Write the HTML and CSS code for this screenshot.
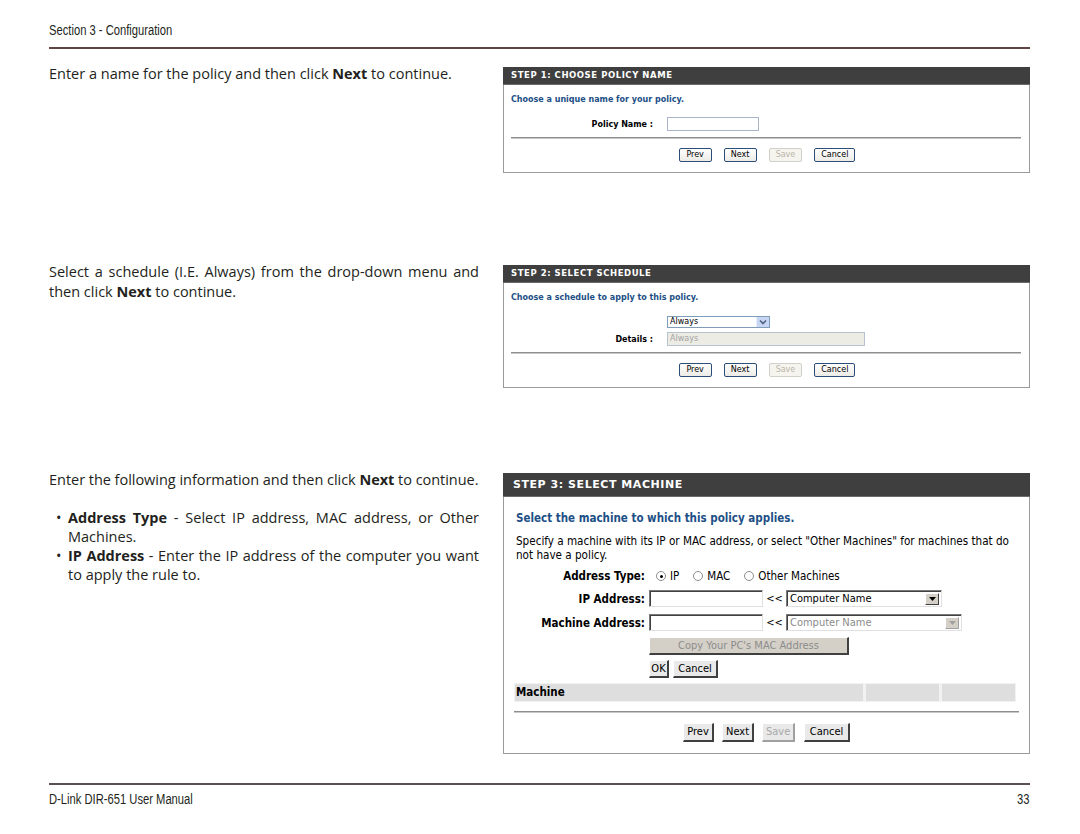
FILE: index.html
```html
<!DOCTYPE html>
<html>
<head>
<meta charset="utf-8">
<link rel="stylesheet" href="styles.css">
</head>
<body>
<div class="page">
  <header class="sec-head"><span class="cond">Section 3 - Configuration</span></header>

  <section class="row row1">
    <p class="txt">Enter a name for the policy and then click <b>Next</b> to continue.</p>
    <div class="panel sm p1">
      <div class="ph">STEP 1: CHOOSE POLICY NAME</div>
      <div class="pb">
        <div class="intro">Choose a unique name for your policy.</div>
        <div class="frow f-name"><span class="lbl">Policy Name :</span><span class="xinp w92"></span></div>
        <div class="rule"></div>
        <div class="btns">
          <span class="xb">Prev</span><span class="xb">Next</span><span class="xb dis">Save</span><span class="xb">Cancel</span>
        </div>
      </div>
    </div>
  </section>

  <section class="row row2">
    <p class="txt">Select a schedule (I.E. Always) from the drop-down menu and then click <b>Next</b> to continue.</p>
    <div class="panel sm p2">
      <div class="ph">STEP 2: SELECT SCHEDULE</div>
      <div class="pb">
        <div class="intro">Choose a schedule to apply to this policy.</div>
        <div class="frow f-sel"><span class="lbl"></span><span class="xsel"><span class="xsel-t">Always</span><span class="xarr"><svg width="8" height="6" viewBox="0 0 8 6"><path d="M1 1.5 L4 4.5 L7 1.5" fill="none" stroke="#4d6185" stroke-width="1.6"/></svg></span></span></div>
        <div class="frow f-det"><span class="lbl">Details :</span><span class="xinp w198 ro">Always</span></div>
        <div class="rule"></div>
        <div class="btns">
          <span class="xb">Prev</span><span class="xb">Next</span><span class="xb dis">Save</span><span class="xb">Cancel</span>
        </div>
      </div>
    </div>
  </section>

  <section class="row row3">
    <div class="txt t3">
      <p class="lead">Enter the following information and then click <b>Next</b> to continue.</p>
      <ul class="bul">
        <li><b>Address Type</b> - Select IP address, MAC address, or Other Machines.</li>
        <li><b>IP Address</b> - Enter the IP address of the computer you want to apply the rule to.</li>
      </ul>
    </div>
    <div class="panel lg p3">
      <div class="ph">STEP 3: SELECT MACHINE</div>
      <div class="pb">
        <div class="intro">Select the machine to which this policy applies.</div>
        <p class="para">Specify a machine with its IP or MAC address, or select "Other Machines" for machines that do not have a policy.</p>
        <div class="frow f-type"><span class="lbl">Address Type:</span>
          <span class="radios">
            <span class="rad on"></span><span class="rl">IP</span>
            <span class="rad"></span><span class="rl">MAC</span>
            <span class="rad"></span><span class="rl">Other Machines</span>
          </span>
        </div>
        <div class="frow f-ip"><span class="lbl">IP Address:</span>
          <span class="cinp"></span><span class="ll">&lt;&lt;</span>
          <span class="csel w156"><span class="csel-t">Computer Name</span><span class="carr"><svg width="7" height="4" viewBox="0 0 7 4"><path d="M0 0 H7 L3.5 4 Z" fill="#000"/></svg></span></span>
        </div>
        <div class="frow f-mac"><span class="lbl">Machine Address:</span>
          <span class="cinp"></span><span class="ll">&lt;&lt;</span>
          <span class="csel w176 dis"><span class="csel-t">Computer Name</span><span class="carr"><svg width="7" height="4" viewBox="0 0 7 4"><path d="M0 0 H7 L3.5 4 Z" fill="#a0a0a0"/></svg></span></span>
        </div>
        <div class="frow f-copy"><span class="lbl"></span><span class="cb copy">Copy Your PC's MAC Address</span></div>
        <div class="frow f-ok"><span class="lbl"></span><span class="cb ok">OK</span><span class="cb can">Cancel</span></div>
        <div class="mtable">
          <span class="mc c1">Machine</span><span class="mc c2"></span><span class="mc c3"></span>
        </div>
        <div class="rule"></div>
        <div class="btns">
          <span class="cb nb">Prev</span><span class="cb nb">Next</span><span class="cb nb dis">Save</span><span class="cb nb">Cancel</span>
        </div>
      </div>
    </div>
  </section>

  <footer class="foot">
    <span class="cond">D-Link DIR-651 User Manual</span>
    <span class="cond right">33</span>
  </footer>
</div>
</body>
</html>
```

FILE: styles.css
```css
html, body {
  margin: 0;
  padding: 0;
  background: #fff;
}

.page {
  width: 981px;
  margin-left: 49px;
  color: #231f20;
}

.cond {
  display: inline-block;
  font-family: "Liberation Sans", Arial, sans-serif;
  transform: scaleX(0.8);
  transform-origin: left center;
  white-space: nowrap;
}
.cond.right { transform-origin: right center; }

.sec-head {
  font-size: 14px;
  line-height: 16px;
  padding-top: 22px;
  height: 25px;
  border-bottom: 2px solid #5e4545;
}

.row {
  display: flex;
  gap: 24px;
  align-items: flex-start;
}

.row1 { margin-top: 18px; }
.row2 { margin-top: 92px; }
.row3 { margin-top: 85px; }

.txt {
  width: 430px;
  margin: -3px 0 0 0;
  font-family: "Open Sans", "Lato", sans-serif;
  font-size: 14.5px;
  line-height: 20px;
  text-align: justify;
  color: #231f20;
}

.txt b { font-weight: 700; }

.t3 { line-height: 19px; }
.t3 .lead { margin: 0; letter-spacing: -0.03px; text-align: left; white-space: nowrap; }
.bul {
  list-style: none;
  margin: 19px 0 0 0;
  padding: 0 0 0 19px;
}
.bul li {
  position: relative;
  text-align: justify;
}
.bul li::before {
  content: "•";
  position: absolute;
  left: -12px;
  top: 0;
}

/* ---- panels ---- */
.panel {
  width: 527px;
  box-sizing: border-box;
  background: #fff;
  font-family: "DejaVu Sans", sans-serif;
  color: #000;
}

.ph {
  background: #3f3f3f;
  color: #fff;
  font-weight: bold;
  border-bottom: 1px solid #6a6a6a;
}

.pb {
  border: 1px solid #9a9a9a;
  border-top: none;
  display: flex;
  flex-direction: column;
}

.intro {
  color: #1d4f86;
  font-weight: bold;
}

.frow {
  display: flex;
  align-items: center;
}

.lbl {
  font-weight: bold;
  text-align: right;
  flex: none;
}

.rule {
  height: 0;
  border-top: 1px solid #8e8e8e;
  border-bottom: 1px solid #c8c8c8;
}

.btns {
  display: flex;
  justify-content: center;
}

/* small panels (steps 1 and 2) */
.sm { font-size: 8px; }
.sm .ph {
  height: 17px;
  line-height: 17px;
  padding-left: 8px;
  font-size: 8.5px;
  letter-spacing: 0.55px;
}
.sm .pb { padding: 0 8px 10px 7px; }
.sm .intro { margin-top: 9px; line-height: 12px; font-size: 8px; }
.sm .lbl { width: 142px; margin-right: 14px; font-size: 8px; }
.sm .f-name { margin-top: 11px; }
.sm .rule { margin-top: 6px; }
.sm .btns { margin-top: 9px; gap: 12px; padding-left: 2px; }

.p1 .f-name { height: 14px; }
.p2 .f-sel { margin-top: 12px; height: 12px; }
.p2 .f-det { margin-top: 4px; height: 14px; }
.p2 .rule { margin-top: 6px; }

.xinp {
  box-sizing: border-box;
  height: 14px;
  border: 1px solid #a9b6c9;
  background: #fff;
  font-size: 8px;
  line-height: 12px;
  padding-left: 2px;
}
.w92 { width: 92px; }
.w198 { width: 198px; }
.xinp.ro { background: #ecebe4; color: #a3a3a3; border-color: #b6c2cf; }

.xsel {
  box-sizing: border-box;
  width: 103px;
  height: 12px;
  border: 1px solid #7f9db9;
  display: flex;
  align-items: stretch;
  font-size: 8px;
}
.xsel-t { flex: 1; line-height: 10px; padding-left: 2px; }
.xarr {
  width: 12px;
  background: #c6d6f3;
  border-left: 1px solid #e8eefa;
  display: flex;
  align-items: center;
  justify-content: center;
}

.xb {
  box-sizing: border-box;
  height: 14px;
  line-height: 12px;
  padding: 0 6px;
  min-width: 33px;
  text-align: center;
  font-size: 8px;
  border: 1px solid #2d4d79;
  border-radius: 2px;
  background: linear-gradient(#ffffff, #ecebe6);
  color: #000;
}
.xb.dis { border-color: #d0cfc8; color: #b9b6a8; background: #f5f4ef; }

/* large panel (step 3) */
.lg {
  font-family: "DejaVu Sans Condensed", "DejaVu Sans", sans-serif;
  font-stretch: condensed;
  font-size: 11.5px;
}
.lg .ph {
  height: 23px;
  line-height: 23px;
  padding-left: 10px;
  font-family: "DejaVu Sans", sans-serif;
  font-stretch: normal;
  font-size: 11px;
  letter-spacing: 0.55px;
}
.lg .pb { padding: 0 10px 11px 10px; }
.lg .intro { margin-top: 14px; padding-left: 2px; line-height: 14px; font-size: 11.5px; }
.lg .para { margin: 9px 0 0 0; padding-left: 2px; line-height: 14px; font-size: 11.6px; color: #000; }
.lg .lbl { width: 131px; margin-right: 4px; font-size: 11.5px; }

.f-type { margin-top: 7px; height: 14px; }
.f-ip { margin-top: 7px; height: 17px; }
.f-mac { margin-top: 7px; height: 17px; }
.f-copy { margin-top: 6px; height: 18px; }
.f-ok { margin-top: 5px; height: 18px; }

.radios { display: flex; align-items: center; }
.rad {
  box-sizing: border-box;
  width: 10px;
  height: 10px;
  border-radius: 50%;
  border: 1px solid #8d8d8d;
  background: #fff;
  margin: 0 4px 0 7px;
  position: relative;
}
.rad.on::after {
  content: "";
  position: absolute;
  left: 2.5px;
  top: 2.5px;
  width: 3px;
  height: 3px;
  border-radius: 50%;
  background: #000;
}
.rl { margin-right: 7px; }

.cinp {
  box-sizing: border-box;
  width: 114px;
  height: 17px;
  border-top: 1px solid #7a7a7a;
  border-left: 1px solid #7a7a7a;
  border-right: 1px solid #e0e0e0;
  border-bottom: 1px solid #e0e0e0;
  box-shadow: inset 1px 1px 0 #404040;
  background: #fff;
}
.ll { width: 23px; text-align: center; font-size: 11px; }

.csel {
  box-sizing: border-box;
  height: 17px;
  display: flex;
  align-items: stretch;
  border-top: 1px solid #7a7a7a;
  border-left: 1px solid #7a7a7a;
  border-right: 1px solid #e0e0e0;
  border-bottom: 1px solid #e0e0e0;
  box-shadow: inset 1px 1px 0 #404040;
  background: #fff;
  font-size: 11px;
}
.w156 { width: 156px; }
.w176 { width: 176px; }
.csel-t { flex: 1; line-height: 15px; padding-left: 3px; }
.csel.dis .csel-t { color: #8c8c8c; }
.carr {
  width: 14px;
  margin: 2px 2px 1px 0;
  background: #d4d0c8;
  border-top: 1px solid #fff;
  border-left: 1px solid #fff;
  border-right: 1px solid #404040;
  border-bottom: 1px solid #404040;
  display: flex;
  align-items: center;
  justify-content: center;
  box-sizing: border-box;
}
.csel.dis .carr { border-right-color: #a0a0a0; border-bottom-color: #a0a0a0; }

.cb {
  box-sizing: border-box;
  height: 18px;
  line-height: 15px;
  text-align: center;
  font-size: 11px;
  background: #e9e9e9;
  border-top: 1px solid #fff;
  border-left: 1px solid #fff;
  border-right: 2px solid #404040;
  border-bottom: 2px solid #404040;
  color: #000;
}
.cb.copy { width: 200px; background: #d4d0c8; color: #8c8c8c; }
.cb.ok { width: 20px; }
.cb.can { width: 45px; margin-left: 4px; }

.mtable {
  margin-top: 5px;
  display: flex;
  gap: 3px;
  background: #f2f2f2;
  padding: 1px;
  height: 19px;
  box-sizing: border-box;
  width: 502px;
}
.mc { background: #dedede; height: 17px; line-height: 17px; }
.c1 { width: 348px; font-weight: bold; font-size: 11.5px; padding-left: 1px; }
.c2 { width: 73px; }
.c3 { width: 73px; }

.lg .rule { margin-top: 9px; }
.lg .btns { margin-top: 10px; gap: 8px; }
.cb.nb { height: 19px; line-height: 16px; padding: 0 3px; }
.cb.nb:nth-child(1) { width: 31px; }
.cb.nb:nth-child(2) { width: 32px; }
.cb.nb:nth-child(3) { width: 33px; }
.cb.nb:nth-child(4) { width: 46px; margin-left: 1px; }
.cb.nb.dis { color: #a8a8a8; border-right-color: #a0a0a0; border-bottom-color: #a0a0a0; }

/* footer */
.foot {
  margin-top: 29px;
  border-top: 2px solid #5a5050;
  display: flex;
  justify-content: space-between;
  font-size: 14px;
  line-height: 16px;
  padding-top: 6px;
}
```
